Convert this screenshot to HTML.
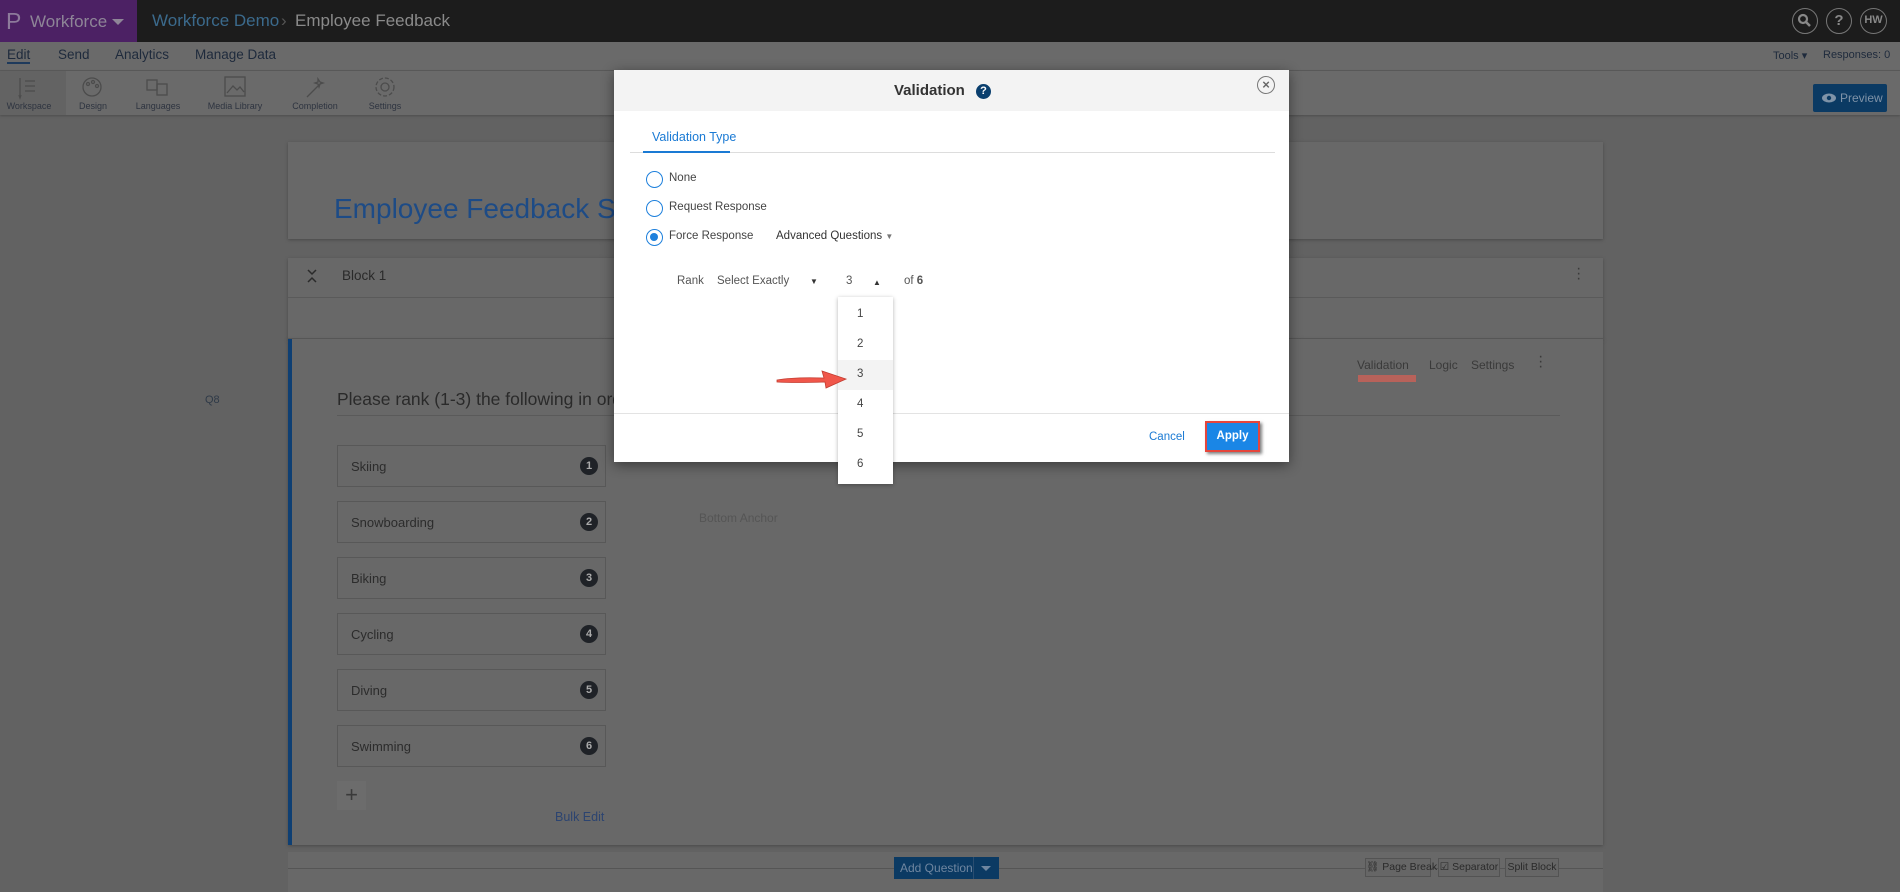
<!DOCTYPE html>
<html><head><meta charset="utf-8"><style>
*{box-sizing:border-box;margin:0;padding:0}
body{width:1900px;height:885px;overflow:hidden;background:#626262;font-family:"Liberation Sans",sans-serif;position:relative;color:#333}
.a{position:absolute;white-space:nowrap}
.hdr{left:0;top:0;width:1900px;height:42px;background:#1c1c1c}
.purple{left:0;top:0;width:137px;height:42px;background:#4c2164}
.nav{left:0;top:42px;width:1900px;height:29px;background:#6a6a6a;border-bottom:1px solid #5a5a5a}
.tb{left:0;top:71px;width:1900px;height:44px;background:#6a6a6a;box-shadow:0 1px 2px #4e4e4e}
.tl{font-size:9px;color:#2e3440;text-align:center;width:80px}
.card{background:#686868;box-shadow:0 1px 3px #4a4a4a}
.ch{left:337px;width:269px;height:42px;border:1px solid #585858;font-size:13px;color:#2c2c2c;padding:13px 0 0 13px}
.bd{position:absolute;right:7px;top:11px;width:18px;height:18px;border-radius:50%;background:#1f2227;color:#aaa;font-size:11px;text-align:center;line-height:18px;font-weight:bold}
.modal{left:614px;top:70px;width:675px;height:392px;background:#fff;box-shadow:0 3px 12px rgba(0,0,0,.45)}
.rd{width:17px;height:17px;border:1.5px solid #1e80dc;border-radius:50%;background:#fff}
.lb{font-size:11.5px;color:#444}
.dd{left:838px;top:297px;width:55px;height:187px;background:#fff;box-shadow:0 1px 4px rgba(0,0,0,.3)}
.it{position:absolute;left:19px;font-size:11.5px;color:#444}
.sb{border:1px solid #535353;font-size:10.5px;color:#2a2a2a;height:19px;line-height:17px;top:858px;background:#666;text-align:center}
</style></head><body>
<div class="a hdr"></div>
<div class="a purple"></div>
<div class="a" style="left:6px;top:8px;font-size:23px;color:#8d7a9b">P</div>
<div class="a" style="left:30px;top:12px;font-size:17px;color:#8e8597">Workforce</div>
<div class="a" style="left:112px;top:19px;border-left:6px solid transparent;border-right:6px solid transparent;border-top:6px solid #8e8597"></div>
<div class="a" style="left:152px;top:11px;font-size:17px;color:#3b6a8c">Workforce Demo</div>
<div class="a" style="left:281px;top:11px;font-size:17px;color:#555">›</div>
<div class="a" style="left:295px;top:11px;font-size:17px;color:#8a8a8a">Employee Feedback</div>
<div class="a" style="left:1792px;top:8px;width:26px;height:26px;border:1.5px solid #777;border-radius:50%"><svg width="23" height="23" viewBox="0 0 23 23"><circle cx="10" cy="10" r="4" stroke="#888" stroke-width="2.2" fill="none"/><path d="M13 13l4 4" stroke="#888" stroke-width="2.5"/></svg></div>
<div class="a" style="left:1826px;top:8px;width:26px;height:26px;border:1.5px solid #777;border-radius:50%;color:#888;font-weight:bold;font-size:15px;text-align:center;line-height:23px">?</div>
<div class="a" style="left:1860px;top:8px;width:27px;height:26px;border:1.5px solid #777;border-radius:50%;color:#888;font-weight:bold;font-size:11px;text-align:center;line-height:23px">HW</div>

<div class="a nav"></div>
<div class="a" style="left:7px;top:47px;font-size:13.5px;color:#1e2a3c;border-bottom:2px solid #1e3a5c">Edit</div>
<div class="a" style="left:58px;top:47px;font-size:13.5px;color:#1e2a3c">Send</div>
<div class="a" style="left:115px;top:47px;font-size:13.5px;color:#1e2a3c">Analytics</div>
<div class="a" style="left:195px;top:47px;font-size:13.5px;color:#1e2a3c">Manage Data</div>
<div class="a" style="left:1773px;top:49px;font-size:11px;color:#1e2a3c">Tools ▾</div>
<div class="a" style="left:1823px;top:49px;font-size:11px;color:#1e2a3c">Responses: 0</div>

<div class="a tb"></div>
<div class="a" style="left:0;top:71px;width:66px;height:44px;background:#636363"></div>
<svg class="a" style="left:0;top:75px" width="420" height="26">
<g stroke="#4c4c4c" stroke-width="1.3" fill="none">
<path d="M20 3v17M19 20l1 3 1-3M25 6h10M25 11h10M25 16h10"/>
<circle cx="92" cy="12" r="9"/><circle cx="88" cy="9" r="1.5"/><circle cx="93" cy="7" r="1.5"/><circle cx="97" cy="11" r="1.5"/>
<rect x="147" y="5" width="10" height="10"/><rect x="157" y="9" width="10" height="11"/>
<rect x="225" y="2" width="20" height="19"/><path d="M227 18l6-7 4 4 3-3 4 5"/>
<path d="M307 22l14-14M318 4l2 3 3 1-3 1-1 3-1-3-3-1 3-1z"/>
<circle cx="385" cy="12" r="4"/><circle cx="385" cy="12" r="9" stroke-dasharray="4 2"/>
</g></svg>
<div class="a tl" style="left:-11px;top:101px">Workspace</div>
<div class="a tl" style="left:53px;top:101px">Design</div>
<div class="a tl" style="left:118px;top:101px">Languages</div>
<div class="a tl" style="left:195px;top:101px">Media Library</div>
<div class="a tl" style="left:275px;top:101px">Completion</div>
<div class="a tl" style="left:345px;top:101px">Settings</div>
<div class="a" style="left:1813px;top:84px;width:74px;height:28px;background:#0b3a63;border-radius:2px;color:#7f93a8;font-size:12px;line-height:28px;padding-left:27px">Preview</div>
<svg class="a" style="left:1821px;top:92px" width="16" height="12"><ellipse cx="8" cy="6" rx="7" ry="4.5" fill="#7f93a8"/><circle cx="8" cy="6" r="2.2" fill="#0b3a63"/></svg>

<div class="a card" style="left:288px;top:142px;width:1315px;height:97px"></div>
<div class="a" style="left:334px;top:193px;font-size:28px;color:#1d4b86">Employee Feedback Survey</div>
<div class="a card" style="left:288px;top:258px;width:1315px;height:82px"></div>
<div class="a" style="left:288px;top:297px;width:1315px;height:1px;background:#5a5a5a"></div>
<div class="a" style="left:288px;top:338px;width:1315px;height:1px;background:#5a5a5a"></div>
<svg class="a" style="left:306px;top:268px" width="12" height="16"><path d="M2 2l4 4 4-4M2 14l4-4 4 4" stroke="#2a2a2a" stroke-width="1.5" fill="none"/></svg>
<div class="a" style="left:342px;top:268px;font-size:13.5px;color:#2a2a2a">Block 1</div>
<div class="a" style="left:1576px;top:266px;font-size:16px;color:#3a3a3a;line-height:5px">·<br>·<br>·</div>
<div class="a card" style="left:288px;top:339px;width:1315px;height:506px;border-left:4px solid #0e3f73"></div>
<div class="a" style="left:205px;top:394px;font-size:11px;color:#2f3a48">Q8</div>
<div class="a" style="left:337px;top:389px;font-size:17.5px;color:#2a2a2a">Please rank (1-3) the following in order of preference</div>
<div class="a" style="left:337px;top:415px;width:1223px;height:1px;background:#5a5a5a"></div>
<div class="a" style="left:1357px;top:358px;font-size:12px;color:#3a3a3a">Validation</div>
<div class="a" style="left:1358px;top:375px;width:58px;height:7px;background:#b8625a"></div>
<div class="a" style="left:1429px;top:358px;font-size:12px;color:#3a3a3a">Logic</div>
<div class="a" style="left:1471px;top:358px;font-size:12px;color:#3a3a3a">Settings</div>
<div class="a" style="left:1538px;top:354px;font-size:16px;color:#3a3a3a;line-height:5px">·<br>·<br>·</div>
<div class="a ch" style="top:445px">Skiing<span class="bd">1</span></div>
<div class="a ch" style="top:501px">Snowboarding<span class="bd">2</span></div>
<div class="a ch" style="top:557px">Biking<span class="bd">3</span></div>
<div class="a ch" style="top:613px">Cycling<span class="bd">4</span></div>
<div class="a ch" style="top:669px">Diving<span class="bd">5</span></div>
<div class="a ch" style="top:725px">Swimming<span class="bd">6</span></div>
<div class="a" style="left:699px;top:511px;font-size:12px;color:#555">Bottom Anchor</div>
<div class="a" style="left:337px;top:781px;width:29px;height:29px;background:#6c6c6c;color:#3a3a3a;font-size:22px;text-align:center;line-height:27px">+</div>
<div class="a" style="left:555px;top:810px;font-size:12.5px;color:#2c4470">Bulk Edit</div>
<div class="a card" style="left:288px;top:852px;width:1315px;height:40px;box-shadow:none"></div>
<div class="a" style="left:288px;top:868px;width:1315px;height:1px;background:#555"></div>
<div class="a" style="left:894px;top:857px;width:105px;height:22px;background:#0b3a63;color:#6f86a0;font-size:12px;line-height:22px;padding-left:6px">Add Question</div>
<div class="a" style="left:973px;top:857px;width:1px;height:22px;background:#2a4d70"></div>
<div class="a" style="left:981px;top:866px;border-left:5px solid transparent;border-right:5px solid transparent;border-top:5px solid #6f86a0"></div>
<div class="a sb" style="left:1365px;width:66px">⛓ Page Break</div>
<div class="a sb" style="left:1438px;width:62px">☑ Separator</div>
<div class="a sb" style="left:1505px;width:54px">Split Block</div>

<div class="a modal">
 <div class="a" style="left:0;top:0;width:675px;height:41px;background:#f3f3f3"></div>
 <div class="a" style="left:280px;top:12px;font-size:15px;font-weight:bold;color:#333">Validation</div>
 <div class="a" style="left:362px;top:14px;width:15px;height:15px;border-radius:50%;background:#0a3f6e;color:#fff;font-size:11px;font-weight:bold;text-align:center;line-height:15px">?</div>
 <div class="a" style="left:643px;top:6px;width:18px;height:18px;border:1.5px solid #777;border-radius:50%;color:#666;font-size:13px;font-weight:bold;text-align:center;line-height:15px">×</div>
 <div class="a" style="left:38px;top:60px;font-size:12.5px;color:#1a7ad4">Validation Type</div>
 <div class="a" style="left:16px;top:82px;width:645px;height:1px;background:#ddd"></div>
 <div class="a" style="left:29px;top:81px;width:87px;height:2px;background:#1a7ad4"></div>
 <div class="a rd" style="left:32px;top:101px"></div><div class="a lb" style="left:55px;top:102px">None</div>
 <div class="a rd" style="left:32px;top:130px"></div><div class="a lb" style="left:55px;top:131px">Request Response</div>
 <div class="a rd" style="left:32px;top:159px"><div style="margin:3px;width:8px;height:8px;border-radius:50%;background:#1e80dc"></div></div><div class="a lb" style="left:55px;top:160px">Force Response</div>
 <div class="a lb" style="left:162px;top:160px;color:#333">Advanced Questions <span style="font-size:8px;color:#777">▼</span></div>
 <div class="a lb" style="left:63px;top:205px;color:#555">Rank</div>
 <div class="a lb" style="left:103px;top:205px;color:#555">Select Exactly</div>
 <div class="a" style="left:196px;top:207px;font-size:8px;color:#333">▼</div>
 <div class="a lb" style="left:232px;top:205px;color:#555">3</div>
 <div class="a" style="left:259px;top:208px;font-size:8px;color:#333">▲</div>
 <div class="a lb" style="left:290px;top:205px;color:#555">of <b>6</b></div>
 <div class="a" style="left:0;top:343px;width:675px;height:1px;background:#e3e3e3"></div>
 <div class="a" style="left:535px;top:361px;font-size:11.5px;color:#1a7ad4">Cancel</div>
 <div class="a" style="left:591px;top:351px;width:55px;height:31px;border:2.5px solid #e6453b;box-shadow:2px 2px 3px rgba(0,0,0,.5);background:#1a86e6;color:#fff;font-size:11.5px;font-weight:bold;text-align:center;line-height:26px">Apply</div>
</div>
<div class="a dd">
 <div class="a" style="left:0;top:63px;width:55px;height:30px;background:#f3f3f3"></div>
 <div class="it" style="top:11px">1</div><div class="it" style="top:41px">2</div><div class="it" style="top:71px">3</div>
 <div class="it" style="top:101px">4</div><div class="it" style="top:131px">5</div><div class="it" style="top:161px">6</div>
</div>
<svg class="a" style="left:774px;top:368px" width="76" height="22"><path d="M3 12Q20 9 50 10L48 3L72 11L52 20L51 14Q20 15 3 14Z" fill="#f0564a" stroke="#c23c30" stroke-width=".8"/></svg>
</body></html>
